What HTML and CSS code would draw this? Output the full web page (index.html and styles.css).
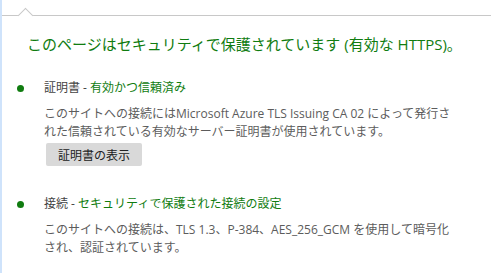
FILE: index.html
```html
<!DOCTYPE html>
<html lang="ja">
  <head>
    <meta charset="UTF-8" />
    <meta name="viewport" content="width=device-width, initial-scale=1.0" />
    <title>接続のセキュリティ</title>
    <link rel="stylesheet" href="styles.css">
  </head>
  <body>
    <div class="flyout">
      <div class="arrow-bar">
        <span class="arrow"></span>
      </div>
      <h1 class="status">このページはセキュリティで保護されています (有効な HTTPS)。</h1>

      <ul class="details">
        <li class="item">
          <div class="item-title">証明書 - <span class="ok">有効かつ信頼済み</span></div>
          <p class="item-text">このサイトへの接続にはMicrosoft Azure TLS Issuing CA 02 によって発行された信頼されている有効なサーバー証明書が使用されています。</p>
          <button class="btn">証明書の表示</button>
        </li>
        <li class="item">
          <div class="item-title">接続 - <span class="ok">セキュリティで保護された接続の設定</span></div>
          <p class="item-text">このサイトへの接続は、TLS 1.3、P-384、AES_256_GCM を使用して暗号化され、認証されています。</p>
        </li>
      </ul>
    </div>
  </body>
</html>
```

FILE: styles.css
```css
body {
  margin: 0;
  background: #fff;
  font-family: "Open Sans", "Noto Sans CJK JP", sans-serif;
}

.flyout {
  height: 273px;
  border-left: 2px solid #cfe3fb;
  box-sizing: border-box;
}

.arrow-bar {
  position: relative;
  height: 16px;
  border-bottom: 1px solid #c8c8c8;
  box-sizing: border-box;
}

.arrow {
  position: absolute;
  left: 18px;
  top: 10px;
  width: 10px;
  height: 10px;
  background: #fff;
  border-left: 1px solid #c8c8c8;
  border-top: 1px solid #c8c8c8;
  transform: rotate(45deg);
}

.status {
  margin: 17px 0 0 25px;
  font-size: 15px;
  font-weight: normal;
  color: #107c10;
  line-height: 22px;
}

.details {
  list-style: none;
  margin: 24px 0 0;
  padding: 0;
}

.item {
  position: relative;
  padding-left: 42px;
  margin-bottom: 29px;
}

.item::before {
  content: "";
  position: absolute;
  left: 15px;
  top: 6px;
  width: 7px;
  height: 7px;
  border-radius: 50%;
  background: #107c10;
}

.item-title {
  font-size: 12px;
  line-height: 18px;
  color: #444;
}

.ok {
  color: #107c10;
}

.item-text {
  margin: 8px 0 0;
  width: 416px;
  font-size: 12px;
  line-height: 18px;
  color: #5c5c5c;
}

.btn {
  margin: 2px 0 0 2px;
  width: 96px;
  height: 23px;
  padding: 0;
  border: none;
  border-radius: 2px;
  background: #d9d9d9;
  color: #222;
  font-family: inherit;
  font-size: 12px;
}
```
